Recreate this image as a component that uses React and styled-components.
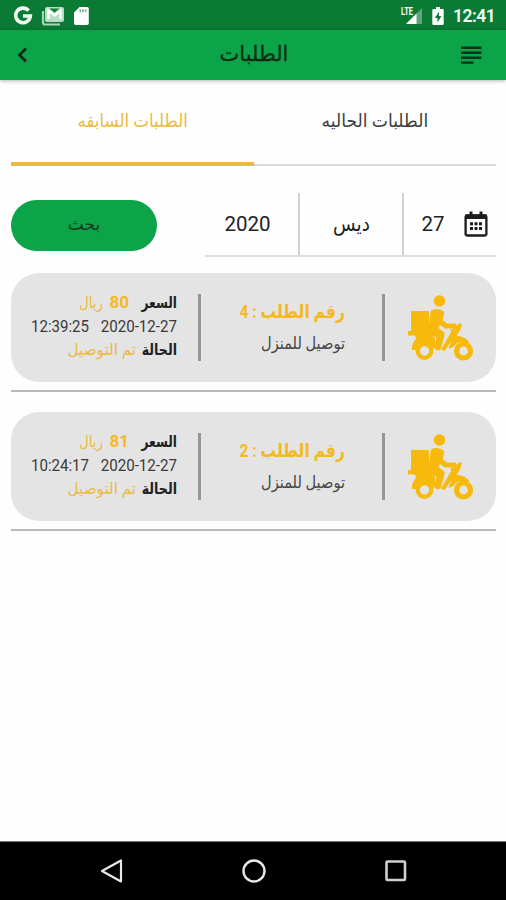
import React from 'react'
import styled, { createGlobalStyle, css } from 'styled-components'

const colors = {
  status: '#0a7a35',
  primary: '#0ba448',
  accent: '#ebba42',
  strongAccent: '#f4ba1d',
  card: '#e4e4e4',
}

const orders = [
  { id: 4, price: 80, date: '2020-12-27', time: '12:39:25' },
  { id: 2, price: 81, date: '2020-12-27', time: '10:24:17' },
]

const GlobalStyle = createGlobalStyle`
  * {
    box-sizing: border-box;
  }
  body {
    margin: 0;
    background: #ffffff;
    font-family: Roboto, 'DejaVu Sans', sans-serif;
    color: #222222;
  }
`

const Screen = styled.div`
  width: 506px;
  height: 900px;
  display: flex;
  flex-direction: column;
  overflow: hidden;
  background: #fefefe;
`

const StatusBar = styled.div`
  height: 30px;
  flex: none;
  display: flex;
  align-items: center;
  justify-content: space-between;
  padding: 1px 11px 0 13px;
  background: ${colors.status};
  color: #f4fff7;
`

const StatusGroup = styled.div`
  display: flex;
  align-items: center;
  gap: ${({ $gap }) => $gap}px;
  svg {
    display: block;
  }
`

const Clock = styled.span`
  width: 42px;
  font-size: 17.5px;
  font-weight: 600;
  letter-spacing: -0.5px;
  line-height: 28px;
`

const AppBar = styled.header`
  height: 50px;
  flex: none;
  display: grid;
  grid-template-columns: 28px 1fr 22px;
  align-items: center;
  padding: 0 24px 0 9px;
  background: ${colors.primary};
  box-shadow: 0 1px 4px rgba(0, 0, 0, 0.3);
  svg {
    display: block;
  }
`

const Title = styled.h1`
  margin: 0;
  padding: 0 0 3px 11px;
  text-align: center;
  font-size: 21px;
  font-weight: 500;
  line-height: 30px;
  color: #0d2b16;
  -webkit-text-stroke: 0.3px currentColor;
`

const Content = styled.main`
  flex: 1;
  padding: 0 10px 0 11px;
`

const Tabs = styled.nav`
  display: flex;
  height: 86px;
`

const Tab = styled.div(
  ({ $active }) => css`
    flex: 1;
    display: flex;
    align-items: center;
    justify-content: center;
    height: 86px;
    padding-bottom: ${$active ? 2 : 4}px;
    font-size: 18px;
    color: ${$active ? colors.accent : '#3d3d3d'};
    border-bottom: ${$active ? `4px solid ${colors.accent}` : '2px solid #dadada'};
  `,
)

const Filter = styled.div`
  display: flex;
  justify-content: space-between;
  align-items: flex-start;
  margin-top: 27px;
  height: 80px;
`

const DateFields = styled.div`
  display: flex;
  width: 291px;
  height: 64px;
  border-bottom: 2px solid #dedede;
`

const DateField = styled.div`
  width: ${({ $width }) => $width}px;
  display: flex;
  align-items: center;
  justify-content: center;
  gap: 19px;
  padding-left: ${({ $indent = 0 }) => $indent}px;
  padding-right: ${({ $last }) => ($last ? 8 : 0)}px;
  font-size: 20.5px;
  border-left: ${({ $last }) => ($last ? 'none' : '2px solid #d2d2d2')};
`

const SearchButton = styled.button`
  width: 146px;
  height: 51px;
  margin-top: 7px;
  padding: 0 0 4px;
  border: none;
  border-radius: 26px;
  background: ${colors.primary};
  color: #153b20;
  font-family: inherit;
  font-size: 17px;
`

const OrderItem = styled.div`
  height: 139px;
  border-bottom: 2px solid #b9b9b9;
  padding-top: 20px;
  &:first-child {
    height: 119px;
    padding-top: 0;
  }
`

const Card = styled.article`
  display: flex;
  align-items: center;
  height: 109px;
  padding-right: 22px;
  border-radius: 28px;
  background: ${colors.card};
`

const Divider = styled.div`
  width: 3px;
  height: 67px;
  margin-right: ${({ $offset = 0 }) => $offset}px;
  background: #969696;
`

const Summary = styled.div`
  width: 181px;
  padding-right: 37px;
`

const OrderNumber = styled.div`
  height: 31px;
  line-height: 30px;
  font-size: 19px;
  font-weight: 700;
  color: ${colors.strongAccent};
`

const Delivery = styled.div`
  height: 31px;
  line-height: 31px;
  font-size: 16.5px;
  color: #444444;
`

const Details = styled.div`
  flex: 1;
  padding: 0 21px 2px 0;
`

const Line = styled.div`
  display: flex;
  gap: ${({ $gap = 0 }) => $gap}px;
  height: 23.5px;
  line-height: 23px;
  font-size: 16px;
  color: #3a3a3a;
`

const Label = styled.span`
  font-weight: 700;
  color: #222222;
`

const Price = styled.b`
  width: 26px;
  font-size: 17px;
  font-weight: 700;
  color: ${colors.strongAccent};
`

const Value = styled.span`
  color: ${colors.accent};
`

const Word = styled.span`
  display: inline-block;
  width: ${({ $width }) => ($width ? `${$width}px` : 'auto')};
  white-space: nowrap;
  transform: scaleX(${({ $scale = 1 }) => $scale});
  transform-origin: ${({ $width }) => ($width ? 'right' : 'center')};
`

const NavBar = styled.footer`
  height: 59px;
  flex: none;
  display: flex;
  align-items: center;
  justify-content: space-between;
  padding: 0 98px 0 99px;
  border-top: 1px solid #777777;
  background: #000000;
`

const GoogleIcon = () => (
  <svg width="20" height="20" viewBox="0 0 20 20" fill="none" stroke="#eefbf1" strokeWidth="3.6">
    <path d="M15.6 4.7A7.3 7.3 0 1 0 17.3 10H10" />
  </svg>
)

const MailIcon = () => (
  <svg width="24" height="20" viewBox="0 0 24 20">
    <path d="M2 5v11.5a2 2 0 0 0 2 2h15" fill="none" stroke="#a9d3b8" strokeWidth="2.2" />
    <rect x="4" y="1" width="19" height="15" rx="2" fill="#b9dcc5" />
    <path d="M7.5 13V4.5l6 5 6-5V13" fill="none" stroke="#ffffff" strokeWidth="2.4" />
    <path d="M8.5 2.5h10l-5 4z" fill={colors.status} />
  </svg>
)

const SdIcon = () => (
  <svg width="18" height="20" viewBox="-1 0 17 20">
    <path
      d="M6 1h7.5a1.8 1.8 0 0 1 1.8 1.8v14.4a1.8 1.8 0 0 1-1.8 1.8H2.3a1.8 1.8 0 0 1-1.8-1.8V6.5z"
      fill="#ffffff"
    />
    <path d="M6 3.2h1.7v3H6zM8.6 3.2h1.7v3H8.6zM11.2 3.2h1.7v3h-1.7z" fill="#7eb893" />
  </svg>
)

const SignalIcon = () => (
  <svg width="22" height="20" viewBox="0 0 22 20">
    <path d="M21 2v16H5z" fill="#5da579" />
    <path d="M15.5 7.5V18H5z" fill="#ffffff" />
    <text
      x="0"
      y="8.5"
      fontSize="10"
      fontWeight="700"
      fill="#ffffff"
      textLength="12"
      lengthAdjust="spacingAndGlyphs"
    >
      LTE
    </text>
  </svg>
)

const BatteryIcon = () => (
  <svg width="12" height="20" viewBox="0 0 12 20">
    <path
      d="M4 1h4v2h2.5a1.2 1.2 0 0 1 1.2 1.2v13.6a1.2 1.2 0 0 1-1.2 1.2h-9a1.2 1.2 0 0 1-1.2-1.2V4.200A1.2 1.2 0 0 1 1.5 3H4z"
      fill="#ffffff"
    />
    <path d="M7.2 5.5 2.8 12h2.7v4.5L9.4 10H6.800z" fill={colors.status} />
  </svg>
)

const MenuIcon = () => (
  <svg width="22" height="20" viewBox="0 0 22 20" fill="#0b3518">
    <path d="M1 1.5h20.5V4H1zM1 6.5h20.5V9H1zM1 11.5h20.5V14H1zM1 16.5h12.5v2.3H1z" />
  </svg>
)

const BackIcon = () => (
  <svg width="28" height="24" viewBox="0 0 28 24" fill="none" stroke="#0a2813" strokeWidth="2.6">
    <path d="M17 5.5 10.5 12l6.5 6.5" />
  </svg>
)

const CalendarIcon = () => (
  <svg width="24" height="26" viewBox="0 0 24 26">
    <rect x="1.6" y="4.5" width="20.8" height="20" rx="2" fill="none" stroke="#1c1c1c" strokeWidth="2.3" />
    <path d="M1 3.5h22V8H1zM5.5.5h3V5h-3zM15.5.5h3V5h-3z" fill="#1c1c1c" />
    {[6, 10.5, 15].map((x) =>
      [11.3, 16].map((y) => <rect key={`${x}-${y}`} x={x} y={y} width="3" height="3" fill="#1c1c1c" />),
    )}
  </svg>
)

const ScooterIcon = () => (
  <svg width="67" height="67" viewBox="0 0 67 67" fill="#f7b90b">
    <circle cx="32.5" cy="7" r="5.8" />
    <path d="M4 17h18v20h3v4.5H1V37h3z" />
    <path d="M24 16.5q6-3 12 .5c1.500 1 1 3 .5 5.500l-1 3.500 4.500 3.500h7c3.500 0 3.500 5 0 5h-9l-5-3.500-1.500 3 4 3c2 1 2.300 2.500 2 4.500l-3.500 13c-1 3-7 2-6.500-1.500l2-9.500-9-3.500z" />
    <path d="M8 41h16l4 3v9l-3 4h-1.500c.5-11-13-11-14-1H5c-.5-5 2-9 4-11z" />
    <circle cx="17.5" cy="57" r="6.8" fill="none" stroke="#f7b90b" strokeWidth="4.2" />
    <circle cx="56.5" cy="57" r="7" fill="none" stroke="#f7b90b" strokeWidth="5.2" />
    <path d="m52.500 29 2.500 1.500-2 6-3.500 5c6 1 11 3.500 13 7l-4 .5c-5-2-9-1-12 4l-5 2 3-8-7 10-3.500-1.500 10.500-18-1.500-2 4-1z" />
  </svg>
)

const Order = ({ order }) => (
  <OrderItem>
    <Card>
      <ScooterIcon />
      <Divider $offset={22} />
      <Summary>
        <OrderNumber>
          <Word $width={105} $scale={0.82}>
            رقم الطلب : {order.id}
          </Word>
        </OrderNumber>
        <Delivery>
          <Word $width={84} $scale={0.885}>
            توصيل للمنزل
          </Word>
        </Delivery>
      </Summary>
      <Divider />
      <Details>
        <Line>
          <Label>
            <Word $width={48} $scale={0.76}>
              السعر
            </Word>
          </Label>
          <Price>{order.price}</Price>
          <Value>
            <Word $width={24} $scale={0.84}>
              ريال
            </Word>
          </Value>
        </Line>
        <Line $gap={12}>
          <Word $width={76} $scale={0.945}>
            {order.date}
          </Word>
          <Word $width={70} $scale={0.94}>
            {order.time}
          </Word>
        </Line>
        <Line>
          <Label>
            <Word $width={41} $scale={0.79}>
              الحالة
            </Word>
          </Label>
          <Value>
            <Word $width={70} $scale={0.95}>
              تم التوصيل
            </Word>
          </Value>
        </Line>
      </Details>
    </Card>
  </OrderItem>
)

const App = () => (
  <>
    <GlobalStyle />
    <Screen>
      <StatusBar>
        <StatusGroup $gap={7.5}>
          <GoogleIcon />
          <MailIcon />
          <SdIcon />
        </StatusGroup>
        <StatusGroup $gap={9}>
          <SignalIcon />
          <BatteryIcon />
          <Clock>12:41</Clock>
        </StatusGroup>
      </StatusBar>
      <AppBar>
        <BackIcon />
        <Title>الطلبات</Title>
        <MenuIcon />
      </AppBar>
      <Content dir="rtl">
        <Tabs>
          <Tab>
            <Word $scale={0.955}>الطلبات الحاليه</Word>
          </Tab>
          <Tab $active>
            <Word $scale={0.925}>الطلبات السابقه</Word>
          </Tab>
        </Tabs>
        <Filter>
          <DateFields>
            <DateField $width={94} $indent={9}>
              <CalendarIcon />
              27
            </DateField>
            <DateField $width={104}>
              <Word $scale={0.9}>ديس</Word>
            </DateField>
            <DateField $width={93} $last>
              2020
            </DateField>
          </DateFields>
          <SearchButton>بحث</SearchButton>
        </Filter>
        <section>
          {orders.map((order) => (
            <Order key={order.id} order={order} />
          ))}
        </section>
      </Content>
      <NavBar>
        <svg width="24" height="26" viewBox="0 0 24 26" fill="none" stroke="#e8e8e8" strokeWidth="2.2">
          <path d="M22 2.5v21L3 13z" strokeLinejoin="round" />
        </svg>
        <svg width="26" height="26" viewBox="0 0 26 26" fill="none" stroke="#e8e8e8" strokeWidth="2.4">
          <circle cx="13" cy="13" r="10.5" />
        </svg>
        <svg width="24" height="24" viewBox="0 0 24 24" fill="none" stroke="#d0d0d0" strokeWidth="2.6">
          <rect x="2.5" y="2.5" width="18.5" height="18.5" rx="1" />
        </svg>
      </NavBar>
    </Screen>
  </>
)

export default App
